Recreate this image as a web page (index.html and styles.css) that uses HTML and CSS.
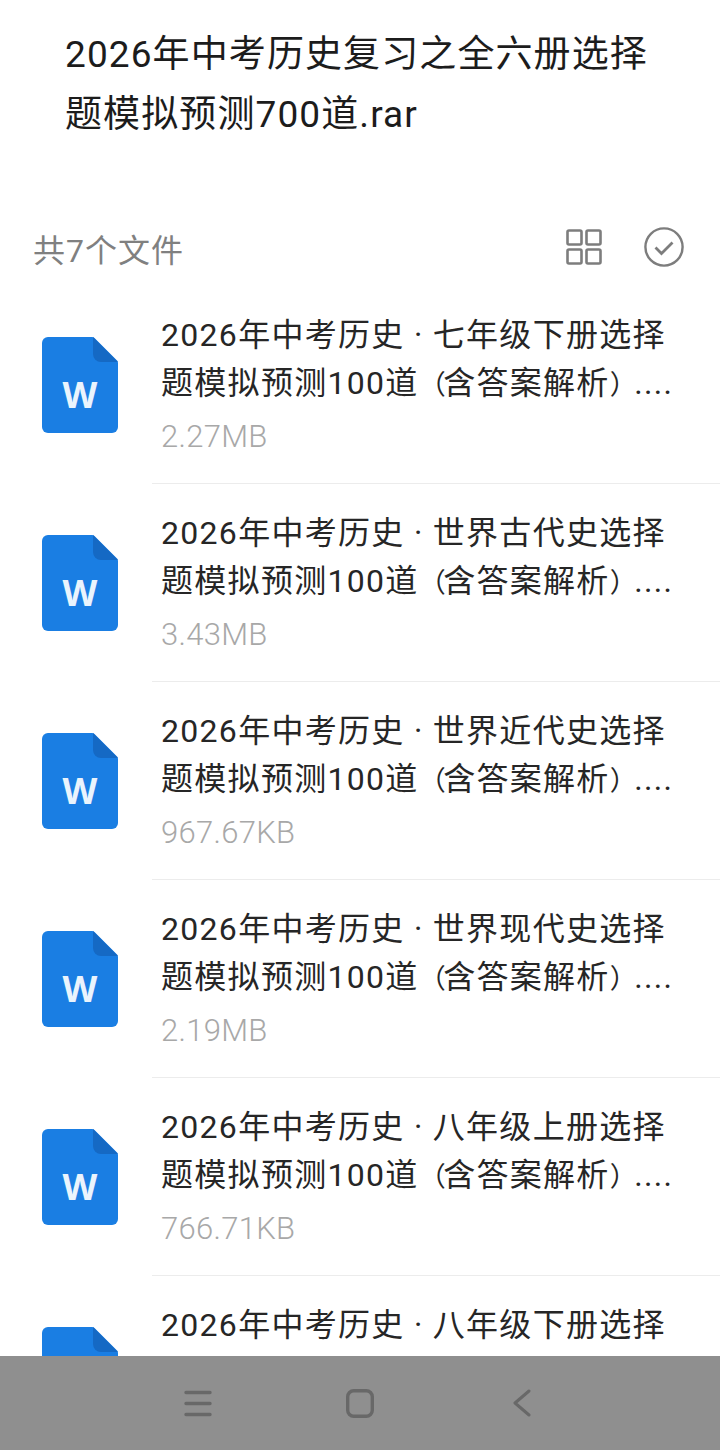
FILE: index.html
```html
<!DOCTYPE html>
<html>
<head>
  <title>2026年中考历史复习之全六册选择题模拟预测700道.rar</title>
  <link rel="stylesheet" href="styles.css">
</head>
<body>
  <div class="page">
    <div class="content">
      <h1 class="archive-title">2026年中考历史复习之全六册选择题模拟预测700道.rar</h1>

      <div class="list-head">
        <span class="file-count">共7个文件</span>
        <div class="head-icons">
          <svg class="icon-grid" width="36" height="36" viewBox="0 0 36 36" fill="none" stroke="#7d7d7d" stroke-width="2.6">
            <rect x="1.5" y="1.5" width="14" height="14" rx="1.5"/>
            <rect x="20.5" y="1.5" width="14" height="14" rx="1.5"/>
            <rect x="1.5" y="20.5" width="14" height="14" rx="1.5"/>
            <rect x="20.5" y="20.5" width="14" height="14" rx="1.5"/>
          </svg>
          <svg class="icon-check" width="40" height="40" viewBox="0 0 40 40" fill="none" stroke="#7d7d7d" stroke-width="2.4">
            <circle cx="20" cy="20" r="18.6"/>
            <path d="M11.5 20.5l6 6 11-11" stroke-width="2.8"/>
          </svg>
        </div>
      </div>

      <ul class="file-list">
        <li class="file-item">
          <svg class="file-icon" width="76" height="96" viewBox="0 0 76 96">
            <path d="M6 0H50Q51.500 0 52.500 1L75 23.500Q76 24.500 76 26V90a6 6 0 0 1-6 6H6a6 6 0 0 1-6-6V6a6 6 0 0 1 6-6z" fill="#1a7ee3"/>
            <path d="M51 0L76 25H59a8 8 0 0 1-8-8z" fill="#1569c4"/>
            <text class="file-letter" x="38" y="71" text-anchor="middle">W</text>
          </svg>
          <div class="file-info">
            <div class="file-name">2026年中考历史 · 七年级下册选择</div>
            <div class="file-name">题模拟预测100道<span class="paren">（</span>含答案解析<span class="paren">）</span>....</div>
            <div class="file-size">2.27MB</div>
          </div>
        </li>
        <li class="file-item">
          <svg class="file-icon" width="76" height="96" viewBox="0 0 76 96">
            <path d="M6 0H50Q51.500 0 52.500 1L75 23.500Q76 24.500 76 26V90a6 6 0 0 1-6 6H6a6 6 0 0 1-6-6V6a6 6 0 0 1 6-6z" fill="#1a7ee3"/>
            <path d="M51 0L76 25H59a8 8 0 0 1-8-8z" fill="#1569c4"/>
            <text class="file-letter" x="38" y="71" text-anchor="middle">W</text>
          </svg>
          <div class="file-info">
            <div class="file-name">2026年中考历史 · 世界古代史选择</div>
            <div class="file-name">题模拟预测100道<span class="paren">（</span>含答案解析<span class="paren">）</span>....</div>
            <div class="file-size">3.43MB</div>
          </div>
        </li>
        <li class="file-item">
          <svg class="file-icon" width="76" height="96" viewBox="0 0 76 96">
            <path d="M6 0H50Q51.500 0 52.500 1L75 23.500Q76 24.500 76 26V90a6 6 0 0 1-6 6H6a6 6 0 0 1-6-6V6a6 6 0 0 1 6-6z" fill="#1a7ee3"/>
            <path d="M51 0L76 25H59a8 8 0 0 1-8-8z" fill="#1569c4"/>
            <text class="file-letter" x="38" y="71" text-anchor="middle">W</text>
          </svg>
          <div class="file-info">
            <div class="file-name">2026年中考历史 · 世界近代史选择</div>
            <div class="file-name">题模拟预测100道<span class="paren">（</span>含答案解析<span class="paren">）</span>....</div>
            <div class="file-size">967.67KB</div>
          </div>
        </li>
        <li class="file-item">
          <svg class="file-icon" width="76" height="96" viewBox="0 0 76 96">
            <path d="M6 0H50Q51.500 0 52.500 1L75 23.500Q76 24.500 76 26V90a6 6 0 0 1-6 6H6a6 6 0 0 1-6-6V6a6 6 0 0 1 6-6z" fill="#1a7ee3"/>
            <path d="M51 0L76 25H59a8 8 0 0 1-8-8z" fill="#1569c4"/>
            <text class="file-letter" x="38" y="71" text-anchor="middle">W</text>
          </svg>
          <div class="file-info">
            <div class="file-name">2026年中考历史 · 世界现代史选择</div>
            <div class="file-name">题模拟预测100道<span class="paren">（</span>含答案解析<span class="paren">）</span>....</div>
            <div class="file-size">2.19MB</div>
          </div>
        </li>
        <li class="file-item">
          <svg class="file-icon" width="76" height="96" viewBox="0 0 76 96">
            <path d="M6 0H50Q51.500 0 52.500 1L75 23.500Q76 24.500 76 26V90a6 6 0 0 1-6 6H6a6 6 0 0 1-6-6V6a6 6 0 0 1 6-6z" fill="#1a7ee3"/>
            <path d="M51 0L76 25H59a8 8 0 0 1-8-8z" fill="#1569c4"/>
            <text class="file-letter" x="38" y="71" text-anchor="middle">W</text>
          </svg>
          <div class="file-info">
            <div class="file-name">2026年中考历史 · 八年级上册选择</div>
            <div class="file-name">题模拟预测100道<span class="paren">（</span>含答案解析<span class="paren">）</span>....</div>
            <div class="file-size">766.71KB</div>
          </div>
        </li>
        <!-- only the top of this row shows above the nav bar -->
        <li class="file-item">
          <svg class="file-icon" width="76" height="96" viewBox="0 0 76 96">
            <path d="M6 0H50Q51.500 0 52.500 1L75 23.500Q76 24.500 76 26V90a6 6 0 0 1-6 6H6a6 6 0 0 1-6-6V6a6 6 0 0 1 6-6z" fill="#1a7ee3"/>
            <path d="M51 0L76 25H59a8 8 0 0 1-8-8z" fill="#1569c4"/>
          </svg>
          <div class="file-info">
            <div class="file-name">2026年中考历史 · 八年级下册选择</div>
          </div>
        </li>
      </ul>
    </div>

    <!-- nav bar -->
    <div class="nav-bar">
      <svg width="28" height="27" viewBox="0 0 28 27" fill="none" stroke="#686868" stroke-width="3.4" stroke-linecap="round">
        <path d="M2 2.500H26M2 13.500H26M2 24.500H26"/>
      </svg>
      <svg width="28" height="29" viewBox="0 0 28 29" fill="none" stroke="#686868" stroke-width="3.4">
        <rect x="1.700" y="1.700" width="24.600" height="25.600" rx="6"/>
      </svg>
      <svg class="nav-back" width="18" height="28" viewBox="0 0 18 28" fill="none" stroke="#686868" stroke-width="3" stroke-linecap="round" stroke-linejoin="round">
        <path d="M16 2L2 14L16 26"/>
      </svg>
    </div>
  </div>
</body>
</html>
```

FILE: styles.css
```css
* {
  box-sizing: border-box;
}

body {
  margin: 0;
  background-color: #fff;
  font-family: Roboto, "Noto Sans CJK SC", sans-serif;
}

.page {
  display: flex;
  flex-direction: column;
  height: 1450px;
}

.content {
  flex: 1;
  overflow: hidden;
}

.archive-title {
  margin: 0;
  padding: 25px 50px 0 65px;
  font-size: 37px;
  font-weight: 400;
  line-height: 60px;
  letter-spacing: 1.1px;
  color: #1c1c1c;
}

.list-head {
  display: flex;
  justify-content: space-between;
  align-items: center;
  margin-top: 77px;
  padding: 0 36px 0 33px;
  height: 50px;
}

.file-count {
  position: relative;
  top: 1px;
  font-size: 32px;
  letter-spacing: 1px;
  color: #808080;
}

.head-icons {
  display: flex;
  align-items: center;
  gap: 42px;
}

.file-list {
  list-style-type: none;
  margin: 14px 0 0;
  padding: 0;
}

.file-item {
  display: flex;
  align-items: flex-start;
  height: 198px;
}

.file-icon {
  flex: none;
  margin: 51px 0 0 42px;
}

.file-letter {
  font-family: "Open Sans", sans-serif;
  font-size: 36px;
  font-weight: 700;
  fill: #eaf4fd;
}

.file-info {
  flex: 1;
  height: 198px;
  margin-left: 34px;
  padding: 25px 30px 0 9px;
  border-bottom: 1px solid #ececec;
}

.file-name {
  height: 48px;
  font-size: 32px;
  line-height: 48px;
  letter-spacing: 1.3px;
  white-space: nowrap;
  color: #262626;
}

/* parens take less room than the other characters */
.paren {
  font-size: 27px;
  line-height: 1;
  letter-spacing: -2.5px;
}

.file-size {
  margin-top: 10px;
  font-size: 31px;
  font-weight: 300;
  line-height: 40px;
  letter-spacing: 0.3px;
  color: #a8a8a8;
}

.nav-bar {
  flex: none;
  display: flex;
  align-items: center;
  gap: 134px;
  height: 94px;
  padding-left: 184px;
  background-color: #8f8f8f;
}

.nav-back {
  margin-left: 5px;
}
```
